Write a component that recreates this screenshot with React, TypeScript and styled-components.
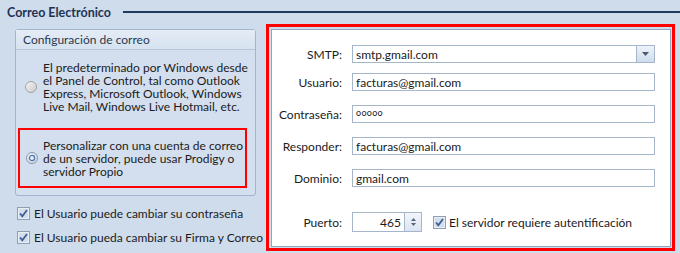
import styled, { createGlobalStyle } from "styled-components";

const GlobalStyle = createGlobalStyle`
  html, body {
    margin: 0;
    padding: 0;
    background: #cfdcec;
  }
`;

const FONT = `Lato, "Liberation Sans", sans-serif`;

const Page = styled.div`
  width: 680px;
  height: 253px;
  display: flex;
  flex-direction: column;
  overflow: hidden;
  background: #cfdcec;
  font-family: ${FONT};
  font-size: 12px;
  color: #1b1b1b;
`;

const SectionHeader = styled.div`
  display: flex;
  align-items: center;
  gap: 12px;
  height: 24px;
  padding-left: 7px;
`;

const SectionTitle = styled.h1`
  margin: 0;
  font-size: 12.5px;
  font-weight: 700;
  color: #1e3354;
  white-space: nowrap;
`;

const SectionRule = styled.div`
  flex: 1;
  height: 2px;
  background: #1f3a5c;
`;

const Body = styled.div`
  display: flex;
  flex: 1;
`;

const LeftColumn = styled.div`
  display: flex;
  flex-direction: column;
  width: 251px;
  padding: 5px 0 0 15px;
`;

const GroupBox = styled.div`
  display: flex;
  flex-direction: column;
  width: 239px;
  height: 165px;
  border: 1px solid #a2b5cd;
  border-radius: 3px;
  background: #d3dfee;
`;

const GroupHeader = styled.div`
  display: flex;
  align-items: center;
  height: 19px;
  padding-left: 7px;
  border-bottom: 1px solid #b4c5da;
  background: linear-gradient(#e4ecf6, #d6e2f0);
  color: #2a3a50;
`;

const OptionRow = styled.div<{ $highlight?: boolean }>`
  display: flex;
  align-items: center;
  gap: ${(p) => (p.$highlight ? "5px" : "6px")};
  line-height: 13px;
  white-space: nowrap;
  ${(p) =>
    p.$highlight
      ? {
          margin: "15px 0 0 2px",
          width: "219px",
          height: "56px",
          padding: "0 0 0 6px",
          border: "2px solid #f00",
        }
      : {
          margin: "11px 0 0 0",
          padding: "0 0 0 9px",
        }}
`;

const CheckRow = styled.label<{ $top: number }>`
  display: flex;
  align-items: center;
  gap: 4px;
  margin: ${(p) => p.$top}px 0 0 2px;
  height: 12px;
  white-space: nowrap;
`;

const RedFrame = styled.div`
  display: flex;
  width: 400px;
  height: 218px;
  padding: 2px 1px 1px 2px;
  border: 3px solid #f00;
`;

const Panel = styled.div`
  flex: 1;
  display: flex;
  flex-direction: column;
  padding-top: 15px;
  background: #fff;
  border: 1px solid #8fa4bd;
`;

const FormRow = styled.div<{ $top: number }>`
  display: flex;
  align-items: center;
  gap: 10px;
  margin-top: ${(p) => p.$top}px;
`;

const Label = styled.span`
  width: 70px;
  text-align: right;
  white-space: nowrap;
`;

const TextBox = styled.div<{ $width?: number }>`
  display: flex;
  align-items: center;
  box-sizing: border-box;
  width: ${(p) => p.$width ?? 303}px;
  height: 18px;
  padding-left: 3px;
  border: 1px solid #a6b6ca;
  background: #fff;
  white-space: nowrap;
`;

const ComboBox = styled(TextBox)`
  justify-content: space-between;
  padding-right: 0;
`;

const ComboButton = styled.div`
  display: flex;
  align-items: center;
  justify-content: center;
  width: 17px;
  height: 100%;
  border-left: 1px solid #a6b6ca;
  background: linear-gradient(#eef3f9, #cfdcec);
`;

const SpinBox = styled(TextBox)`
  justify-content: flex-end;
  padding-left: 0;
  height: 20px;
`;

const SpinValue = styled.span`
  padding-right: 3px;
`;

const SpinButton = styled.div`
  display: flex;
  flex-direction: column;
  align-items: center;
  justify-content: center;
  gap: 2px;
  width: 16px;
  height: 100%;
  border-left: 1px solid #a6b6ca;
  background: linear-gradient(#f2f6fb, #dbe5f1);
`;

const AuthCheck = styled.label`
  display: flex;
  align-items: center;
  gap: 3px;
  margin-left: 1px;
  white-space: nowrap;
`;

const Password = styled.span`
  font-size: 9px;
  letter-spacing: 0.3px;
  transform: translateY(-2px);
`;

function Radio({ checked }: { checked?: boolean }) {
  return (
    <svg width="12" height="12" viewBox="0 0 12 12" style={{ flexShrink: 0 }}>
      <defs>
        <linearGradient id={checked ? "rg1" : "rg0"} x1="0" y1="0" x2="1" y2="1">
          <stop offset="0" stopColor={checked ? "#f4f7fb" : "#f5f5f5"} />
          <stop offset="1" stopColor={checked ? "#c9d6e6" : "#c9c9c9"} />
        </linearGradient>
      </defs>
      <circle cx="6" cy="6" r="5.5" fill={`url(#${checked ? "rg1" : "rg0"})`} stroke={checked ? "#8796aa" : "#a3a3a3"} />
      {checked && <circle cx="6" cy="6" r="2.6" fill="#e8f0fa" stroke="#5378a8" strokeWidth="1.3" />}
    </svg>
  );
}

function CheckBox() {
  return (
    <svg width="13" height="13" viewBox="0 0 13 13" style={{ flexShrink: 0 }}>
      <rect x="0.5" y="0.5" width="12" height="12" fill="#e9eef5" stroke="#8e9fb6" />
      <rect x="2" y="2" width="9" height="9" fill="#d4deeb" />
      <path d="M3 6.5 L5.3 9.2 L10 3" fill="none" stroke="#3b5f98" strokeWidth="1.8" />
    </svg>
  );
}

function DropArrow() {
  return (
    <svg width="7" height="4" viewBox="0 0 7 4">
      <path d="M0 0 H7 L3.5 4 Z" fill="#4a5a70" />
    </svg>
  );
}

function SpinArrow({ up }: { up?: boolean }) {
  return (
    <svg width="5" height="3" viewBox="0 0 5 3">
      <path d={up ? "M0 3 H5 L2.5 0 Z" : "M0 0 H5 L2.5 3 Z"} fill="#56667a" />
    </svg>
  );
}

export default function App() {
  return (
    <>
      <GlobalStyle />
      <Page>
        <SectionHeader>
          <SectionTitle>Correo Electrónico</SectionTitle>
          <SectionRule />
        </SectionHeader>
        <Body>
          <LeftColumn>
            <GroupBox>
              <GroupHeader>Configuración de correo</GroupHeader>
              <OptionRow>
                <Radio />
                <span>
                  El predeterminado por Windows desde
                  <br />
                  el Panel de Control, tal como Outlook
                  <br />
                  Express, Microsoft Outlook, Windows
                  <br />
                  Live Mail, Windows Live Hotmail, etc.
                </span>
              </OptionRow>
              <OptionRow $highlight>
                <Radio checked />
                <span>
                  Personalizar con una cuenta de correo
                  <br />
                  de un servidor, puede usar Prodigy o
                  <br />
                  servidor Propio
                </span>
              </OptionRow>
            </GroupBox>
            <CheckRow $top={11}>
              <CheckBox />
              El Usuario puede cambiar su contraseña
            </CheckRow>
            <CheckRow $top={12}>
              <CheckBox />
              El Usuario pueda cambiar su Firma y Correo
            </CheckRow>
          </LeftColumn>
          <RedFrame>
            <Panel>
              <FormRow $top={0}>
                <Label>SMTP:</Label>
                <ComboBox>
                  smtp.gmail.com
                  <ComboButton>
                    <DropArrow />
                  </ComboButton>
                </ComboBox>
              </FormRow>
              <FormRow $top={10}>
                <Label>Usuario:</Label>
                <TextBox>facturas@gmail.com</TextBox>
              </FormRow>
              <FormRow $top={14}>
                <Label>Contraseña:</Label>
                <TextBox>
                  <Password>ooooo</Password>
                </TextBox>
              </FormRow>
              <FormRow $top={14}>
                <Label>Responder:</Label>
                <TextBox>facturas@gmail.com</TextBox>
              </FormRow>
              <FormRow $top={14}>
                <Label>Dominio:</Label>
                <TextBox>gmail.com</TextBox>
              </FormRow>
              <FormRow $top={25}>
                <Label>Puerto:</Label>
                <SpinBox $width={70}>
                  <SpinValue>465</SpinValue>
                  <SpinButton>
                    <SpinArrow up />
                    <SpinArrow />
                  </SpinButton>
                </SpinBox>
                <AuthCheck>
                  <CheckBox />
                  El servidor requiere autentificación
                </AuthCheck>
              </FormRow>
            </Panel>
          </RedFrame>
        </Body>
      </Page>
    </>
  );
}
